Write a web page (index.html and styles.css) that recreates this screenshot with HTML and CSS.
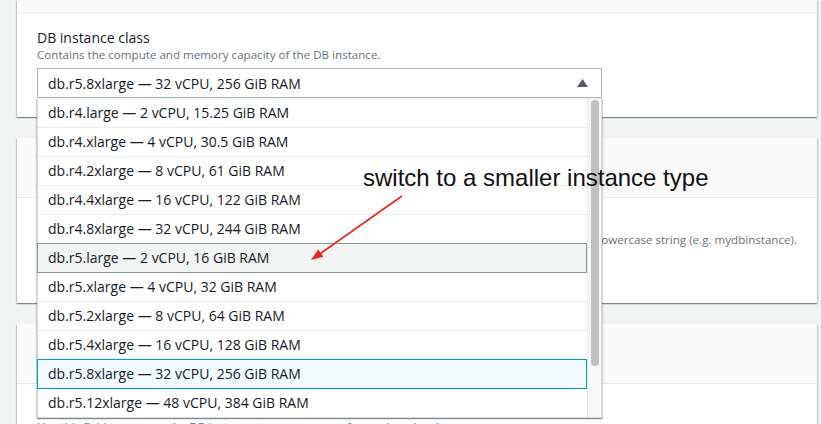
FILE: index.html
```html
<!DOCTYPE html>
<html lang="en">
<head>
<meta charset="utf-8">
<title>DB instance class</title>
<link rel="stylesheet" href="styles.css">
</head>
<body>
<div class="page">
  <section class="panel">
    <div class="panel-header panel-header-short"></div>
    <div class="panel-body">
      <div class="field-label">DB instance class</div>
      <p class="field-desc">Contains the compute and memory capacity of the DB instance.</p>
      <div class="select-wrap">
        <div class="select">
          <span class="select-value">db.r5.8xlarge — 32 vCPU, 256 GiB RAM</span>
          <svg class="caret" width="11" height="8" viewBox="0 0 11 8"><polygon points="0,8 5.5,0 11,8" fill="#545b64"/></svg>
        </div>
        <div class="dropdown">
          <ul class="options">
            <li class="option">db.r4.large — 2 vCPU, 15.25 GiB RAM</li>
            <li class="option">db.r4.xlarge — 4 vCPU, 30.5 GiB RAM</li>
            <li class="option">db.r4.2xlarge — 8 vCPU, 61 GiB RAM</li>
            <li class="option">db.r4.4xlarge — 16 vCPU, 122 GiB RAM</li>
            <li class="option">db.r4.8xlarge — 32 vCPU, 244 GiB RAM</li>
            <li class="option option-hover">db.r5.large — 2 vCPU, 16 GiB RAM</li>
            <li class="option">db.r5.xlarge — 4 vCPU, 32 GiB RAM</li>
            <li class="option">db.r5.2xlarge — 8 vCPU, 64 GiB RAM</li>
            <li class="option">db.r5.4xlarge — 16 vCPU, 128 GiB RAM</li>
            <li class="option option-selected">db.r5.8xlarge — 32 vCPU, 256 GiB RAM</li>
            <li class="option option-last">db.r5.12xlarge — 48 vCPU, 384 GiB RAM</li>
          </ul>
          <div class="scrollbar"><div class="thumb"></div></div>
        </div>
      </div>
    </div>
  </section>

  <section class="panel">
    <div class="panel-header"><h2 class="panel-title">Settings</h2></div>
    <div class="panel-body">
      <div class="field-label">DB instance identifier</div>
      <p class="field-desc field-desc-right">The DB instance identifier is case-insensitive, but is stored as an all lowercase string (e.g. mydbinstance).</p>
      <div class="input"></div>
    </div>
  </section>

  <section class="panel">
    <div class="panel-header"><h2 class="panel-title">Additional configuration</h2></div>
    <div class="panel-body panel-body-low">
      <div class="field-label">New DB instance identifier</div>
      <p class="field-desc">Use this field to rename the DB instance to a new name of your choosing. <a class="link" href="#">Learn more</a></p>
    </div>
  </section>

  <div class="annotation">
    <div class="annotation-text">switch to a smaller instance type</div>
    <svg class="annotation-arrow" width="821" height="424" viewBox="0 0 821 424">
      <line x1="402" y1="196" x2="319" y2="254.5" stroke="#e8281e" stroke-width="1.6"/>
      <polygon points="311,260 323.4,256.7 318.2,249.4" fill="#e8281e"/>
    </svg>
  </div>
</div>
</body>
</html>
```
FILE: styles.css
```css
* { box-sizing: border-box; }

html, body {
  margin: 0;
  padding: 0;
}

body {
  background: #f2f3f3;
  font-family: "Open Sans", "Noto Sans", sans-serif;
  color: #16191f;
  overflow: hidden;
  width: 821px;
  height: 424px;
}

.page {
  position: relative;
  padding: 0 4px 0 17px;
  display: flex;
  flex-direction: column;
  gap: 21px;
}

.panel {
  background: #ffffff;
  box-shadow: 0 1px 1px 0 rgba(0, 28, 36, 0.3), 1px 1px 1px 0 rgba(0, 28, 36, 0.15), -1px 1px 1px 0 rgba(0, 28, 36, 0.15);
}

.panel-header {
  height: 60px;
  background: #fafafa;
  border-bottom: 1px solid #eaeded;
  padding: 0 20px;
  display: flex;
  align-items: center;
}

.panel-header-short {
  height: 13px;
}

.panel-title {
  margin: 0;
  font-size: 18px;
  font-weight: 700;
  color: #16191f;
}

.panel-body {
  padding: 15px 20px 19px;
}

.panel-body-low {
  padding-top: 16px;
}

.field-label {
  font-size: 14px;
  line-height: 20px;
  color: #16191f;
}

.field-desc {
  margin: 0;
  font-size: 11.6px;
  line-height: 14px;
  color: #687078;
}

.field-desc-right {
  text-align: right;
  white-space: nowrap;
}

.link {
  color: #0073bb;
  text-decoration: none;
}

.select-wrap {
  position: relative;
  width: 565px;
  margin-top: 6px;
}

.select {
  height: 30px;
  border: 1px solid #aab7b8;
  display: flex;
  align-items: center;
  justify-content: space-between;
  padding: 0 13px 0 10px;
  font-size: 14px;
  color: #16191f;
}

.caret {
  display: block;
}

.dropdown {
  position: absolute;
  top: 100%;
  left: 0;
  width: 565px;
  z-index: 10;
  display: flex;
  background: #ffffff;
  border: 1px solid #d5dbdb;
  border-top-color: #eaeded;
  box-shadow: 0 1px 1px 0 rgba(0, 28, 36, 0.3), 1px 1px 1px 0 rgba(0, 28, 36, 0.15), -1px 1px 1px 0 rgba(0, 28, 36, 0.15);
}

.options {
  list-style: none;
  margin: 0;
  padding: 0;
  width: 549px;
}

.option {
  position: relative;
  height: 29px;
  line-height: 28px;
  padding-left: 10px;
  border-bottom: 1px solid #eaeded;
  font-size: 14px;
  color: #16191f;
  white-space: nowrap;
}

.option-last {
  height: 28px;
  border-bottom: none;
}

.option-hover,
.option-selected {
  height: 30px;
  margin-top: -1px;
  margin-left: -1px;
  border: 1px solid #879596;
  background: #f2f3f3;
}

.option-selected {
  border-color: #00a1c9;
  background: #f1faff;
}

.scrollbar {
  width: 14px;
  background: #f9f9f9;
  border-left: 1px solid #e8e8e8;
  padding: 1px 0 0 3px;
}

.thumb {
  width: 8px;
  height: 266px;
  border-radius: 4px;
  background: #c1c1c1;
}

.input {
  width: 565px;
  height: 30px;
  margin-top: 7px;
  border: 1px solid #aab7b8;
}

.annotation {
  position: absolute;
  left: 0;
  top: 0;
  width: 821px;
  height: 424px;
  pointer-events: none;
  z-index: 20;
}

.annotation-text {
  position: absolute;
  left: 363px;
  top: 166px;
  font-family: "Liberation Sans", Arial, sans-serif;
  font-size: 24px;
  line-height: 24px;
  color: #111111;
  white-space: nowrap;
}

.annotation-arrow {
  position: absolute;
  left: 0;
  top: 0;
}
```
